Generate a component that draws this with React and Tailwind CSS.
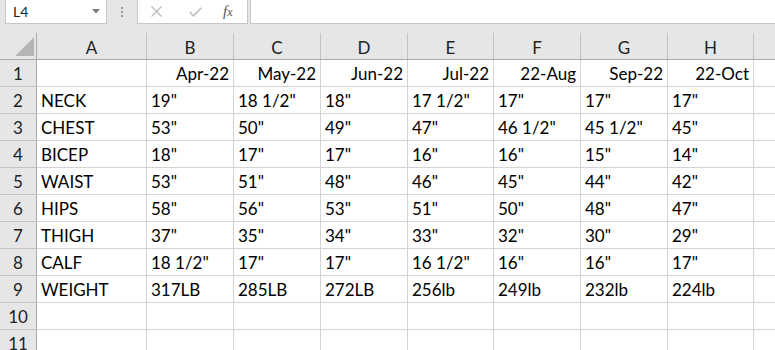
import React from "react";

const colWidths = [
  "w-[110px]",
  "w-[87px]",
  "w-[87px]",
  "w-[87px]",
  "w-[86px]",
  "w-[87px]",
  "w-[87px]",
  "w-[86px]",
];
const letters = ["A", "B", "C", "D", "E", "F", "G", "H"];

const rows = [
  ["", "Apr-22", "May-22", "Jun-22", "Jul-22", "22-Aug", "Sep-22", "22-Oct"],
  ["NECK", '19"', '18 1/2"', '18"', '17 1/2"', '17"', '17"', '17"'],
  ["CHEST", '53"', '50"', '49"', '47"', '46 1/2"', '45 1/2"', '45"'],
  ["BICEP", '18"', '17"', '17"', '16"', '16"', '15"', '14"'],
  ["WAIST", '53"', '51"', '48"', '46"', '45"', '44"', '42"'],
  ["HIPS", '58"', '56"', '53"', '51"', '50"', '48"', '47"'],
  ["THIGH", '37"', '35"', '34"', '33"', '32"', '30"', '29"'],
  ["CALF", '18 1/2"', '17"', '17"', '16 1/2"', '16"', '16"', '17"'],
  ["WEIGHT", "317LB", "285LB", "272LB", "256lb", "249lb", "232lb", "224lb"],
  ["", "", "", "", "", "", "", ""],
  ["", "", "", "", "", "", "", ""],
];

function FormulaBar() {
  return (
    <div className="flex h-[33px] bg-[#e6e6e6]">
      <div className="ml-[5px] flex h-[24px] w-[102px] items-center justify-between border-x border-b border-[#c6c6c6] bg-white pl-[7px] pr-[6px] font-['Lato',sans-serif] text-[14px] text-[#222]">
        <span>L4</span>
        <svg width="8" height="5" viewBox="0 0 8 5">
          <path d="M0 0 H8 L4 4.5 Z" fill="#7b7b7b" />
        </svg>
      </div>
      <div className="flex h-[24px] w-[30px] flex-col items-center justify-center gap-[2px]">
        <div className="h-[2px] w-[2px] bg-[#9a9a9a]" />
        <div className="h-[2px] w-[2px] bg-[#9a9a9a]" />
        <div className="h-[2px] w-[2px] bg-[#9a9a9a]" />
      </div>
      <div className="flex h-[24px] w-[111px] items-center border-x border-b border-[#c6c6c6] bg-white">
        <svg className="ml-[13px]" width="11" height="11" viewBox="0 0 11 11">
          <path d="M0.5 0.5 L10.5 10.5 M10.5 0.5 L0.5 10.5" stroke="#bdbdbd" strokeWidth="1.3" />
        </svg>
        <svg className="ml-[27px]" width="13" height="10" viewBox="0 0 13 10">
          <path d="M0.7 5 L4.5 8.8 L12.3 0.8" stroke="#bdbdbd" strokeWidth="1.6" fill="none" />
        </svg>
        <span className="ml-[21px] font-['Liberation_Serif',serif] text-[15px] italic text-[#555]">
          f<span className="text-[12px]">x</span>
        </span>
      </div>
      <div className="ml-[2px] h-[24px] flex-1 border-l border-b border-[#c6c6c6] bg-white" />
    </div>
  );
}

function HeaderRow() {
  return (
    <div className="flex h-[27px] border-b border-[#ababab] bg-[#e6e6e6] text-[#222]">
      <div className="relative w-[37px] shrink-0 border-r border-[#ababab]">
        <svg className="absolute left-[15px] top-[4px]" width="19" height="19" viewBox="0 0 19 19">
          <path d="M19 0 V19 H0 Z" fill="#b5b5b5" />
        </svg>
      </div>
      {letters.map((l, i) => (
        <div
          key={l}
          className={`${colWidths[i]} flex shrink-0 items-end justify-center border-r border-[#c3c3c3] pb-[2px]`}
        >
          {l}
        </div>
      ))}
      <div className="flex-1" />
    </div>
  );
}

export default function App() {
  return (
    <div className="h-[350px] w-[775px] overflow-hidden bg-white font-['Lato','Liberation_Sans',sans-serif] text-[17px] leading-[18px]">
      <FormulaBar />
      <HeaderRow />
      {rows.map((r, ri) => (
        <div key={ri} className="flex h-[27px]">
          <div className="flex w-[37px] shrink-0 items-end justify-center border-r border-b border-r-[#ababab] border-b-[#c3c3c3] bg-[#e6e6e6] pb-[3px] text-[#222]">
            {ri + 1}
          </div>
          {r.map((v, ci) => (
            <div
              key={ci}
              className={`${colWidths[ci]} flex shrink-0 items-end overflow-hidden whitespace-nowrap border-r border-b border-[#d4d4d4] pb-[3px] text-black ${
                ri === 0 ? "justify-end pr-[4px]" : "pl-[4px]"
              }`}
            >
              {v}
            </div>
          ))}
          <div className="flex-1 border-b border-[#d4d4d4]" />
        </div>
      ))}
    </div>
  );
}
